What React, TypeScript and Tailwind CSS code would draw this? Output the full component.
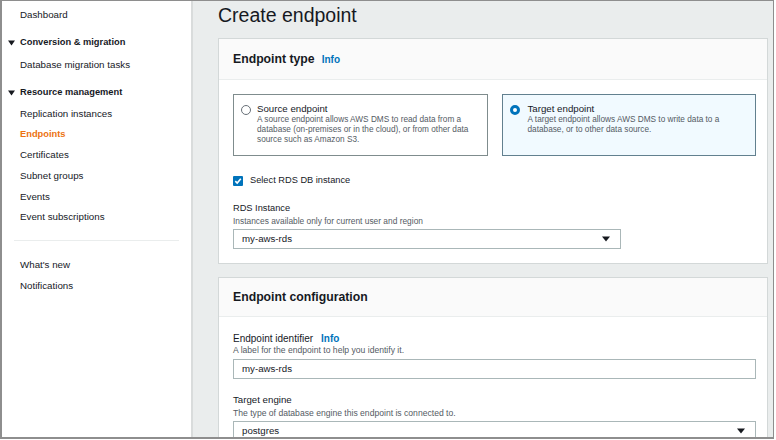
import React from "react";

function Tri({ className = "" }: { className?: string }) {
  return (
    <svg width="8" height="6" viewBox="0 0 8 6" className={className}>
      <path d="M0 0.5 H8 L4 5.5 Z" fill="#16191f" />
    </svg>
  );
}

function NavItem({ label, active = false }: { label: string; active?: boolean }) {
  return (
    <div
      className={
        active
          ? "h-[20.6px] flex items-center text-[9.3px] font-bold text-[#ec7211]"
          : "h-[20.6px] flex items-center text-[9.75px] text-[#16191f]"
      }
    >
      {label}
    </div>
  );
}

function NavHeading({ label }: { label: string }) {
  return (
    <div className="h-[23px] mt-[6px] -ml-[12px] flex items-center gap-[5px] text-[9.3px] font-bold text-[#16191f]">
      <svg width="7" height="6" viewBox="0 0 7 6">
        <path d="M0 0.5 H7 L3.5 5.5 Z" fill="#16191f" />
      </svg>
      <span>{label}</span>
    </div>
  );
}

function SelectBox({ value, className = "" }: { value: string; className?: string }) {
  return (
    <div
      className={
        "h-[20px] border border-[#aab7b8] bg-white flex items-center justify-between pl-[8px] pr-[10px] text-[9.7px] text-[#16191f] " +
        className
      }
    >
      <span>{value}</span>
      <Tri />
    </div>
  );
}

export default function App() {
  return (
    <div className="w-[776px] h-[440px] bg-white font-['Liberation_Sans',Arial,sans-serif]">
      <div className="w-[774px] h-[439px] border-l-2 border-t border-r border-b-2 border-[#8e8e8e] flex overflow-hidden">
        {/* Sidebar */}
        <aside className="w-[191px] shrink-0 bg-white border-r-2 border-[#d9dcdc] pt-[4px] pl-[18px]">
          <NavItem label="Dashboard" />
          <NavHeading label="Conversion & migration" />
          <NavItem label="Database migration tasks" />
          <NavHeading label="Resource management" />
          <NavItem label="Replication instances" />
          <NavItem label="Endpoints" active />
          <NavItem label="Certificates" />
          <NavItem label="Subnet groups" />
          <NavItem label="Events" />
          <NavItem label="Event subscriptions" />
          <div className="mt-[12px] -ml-[6px] mr-[12px] h-[1px] bg-[#eaeded]" />
          <div className="mt-[14.5px]">
            <NavItem label="What's new" />
            <NavItem label="Notifications" />
          </div>
        </aside>

        {/* Main */}
        <main className="flex-1 bg-[#eaeded] pl-[25px] pr-[5px] pt-[2px] overflow-hidden">
          <h1 className="text-[19.5px] leading-[24px] text-[#16191f] font-normal">Create endpoint</h1>

          {/* Card 1 */}
          <section className="mt-[11px] bg-white border border-[#d3d8d8]">
            <div className="h-[41px] bg-[#fafafa] border-b border-[#eaeded] flex items-center pl-[14px] gap-[7px]">
              <span className="text-[12.25px] font-bold text-[#16191f]">Endpoint type</span>
              <span className="text-[10px] font-bold text-[#0073bb]">Info</span>
            </div>
            <div className="pt-[14px] pl-[14px] pr-[11px] pb-[14px]">
              <div className="grid grid-cols-2 gap-[14px]">
                <div className="h-[62px] border border-[#7f8c8d] bg-white pt-[8px] pl-[7px] pr-[8px] flex gap-[6px]">
                  <div className="mt-[1.5px] w-[10px] h-[10px] rounded-full border border-[#687078] bg-white shrink-0" />
                  <div>
                    <div className="text-[9.7px] leading-[12px] text-[#16191f]">Source endpoint</div>
                    <div className="text-[8.25px] leading-[10px] text-[#545b64]">
                      A source endpoint allows AWS DMS to read data from a database (on-premises or in the cloud), or from other data source such as Amazon S3.
                    </div>
                  </div>
                </div>
                <div className="h-[62px] border border-[#62808f] bg-[#f1faff] pt-[8px] pl-[7px] pr-[8px] flex gap-[8px]">
                  <div className="mt-[1.5px] w-[10px] h-[10px] rounded-full border-[3px] border-[#0073bb] bg-white shrink-0" />
                  <div>
                    <div className="text-[9.7px] leading-[12px] text-[#16191f]">Target endpoint</div>
                    <div className="text-[8.25px] leading-[10px] text-[#545b64]">
                      A target endpoint allows AWS DMS to write data to a database, or to other data source.
                    </div>
                  </div>
                </div>
              </div>

              <div className="mt-[18px] h-[14px] flex items-center gap-[7px]">
                <div className="w-[10px] h-[10px] rounded-[1px] bg-[#0073bb] flex items-center justify-center">
                  <svg width="8" height="8" viewBox="0 0 8 8">
                    <path d="M1.3 4.2 L3.2 6 L6.8 1.8" stroke="white" strokeWidth="1.6" fill="none" />
                  </svg>
                </div>
                <span className="text-[9.25px] text-[#16191f]">Select RDS DB instance</span>
              </div>

              <div className="mt-[14px] text-[9.25px] leading-[12px] text-[#16191f]">RDS Instance</div>
              <div className="mt-[2px] text-[8.4px] leading-[10px] text-[#545b64]">
                Instances available only for current user and region
              </div>
              <SelectBox value="my-aws-rds" className="mt-[3px] w-[388px]" />
            </div>
          </section>

          {/* Card 2 */}
          <section className="mt-[13px] bg-white border border-[#d3d8d8]">
            <div className="h-[39px] bg-[#fafafa] border-b border-[#eaeded] flex items-center pl-[14px]">
              <span className="text-[12.25px] font-bold text-[#16191f]">Endpoint configuration</span>
            </div>
            <div className="pt-[16px] pl-[14px] pr-[11px] pb-[14px]">
              <div className="flex items-center gap-[8px] leading-[12px]">
                <span className="text-[10px] text-[#16191f]">Endpoint identifier</span>
                <span className="text-[10px] font-bold text-[#0073bb]">Info</span>
              </div>
              <div className="text-[8.6px] leading-[10px] text-[#545b64]">
                A label for the endpoint to help you identify it.
              </div>
              <div className="mt-[4px] h-[20px] border border-[#aab7b8] bg-white flex items-center pl-[8px] text-[9.7px] text-[#16191f]">
                my-aws-rds
              </div>

              <div className="mt-[15px] text-[9.7px] leading-[12px] text-[#16191f]">Target engine</div>
              <div className="mt-[2px] text-[8.6px] leading-[10px] text-[#545b64]">
                The type of database engine this endpoint is connected to.
              </div>
              <SelectBox value="postgres" className="mt-[3px]" />
            </div>
          </section>
        </main>
      </div>
    </div>
  );
}
